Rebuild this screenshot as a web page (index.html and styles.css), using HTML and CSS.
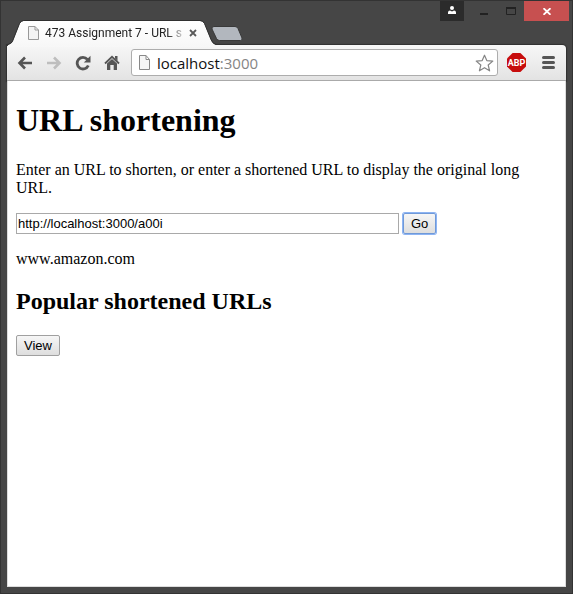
FILE: index.html
```html
<!DOCTYPE html>
<html lang="en">
<head>
<meta charset="utf-8">
<title>473 Assignment 7 - URL shortening</title>
<link rel="stylesheet" href="styles.css">
</head>
<body>
<div class="window">
  <header class="titlebar">
    <div class="tab">
      <svg class="tab-shape" width="218" height="27" viewBox="0 0 218 27" aria-hidden="true">
        <defs><linearGradient id="tabfill" x1="0" y1="0" x2="0" y2="1"><stop offset="0" stop-color="#fff"/><stop offset="1" stop-color="#f7f7f7"/></linearGradient></defs>
        <path d="M0 27V26.500Q1 24.500 4 23.500Q5.500 22.500 6 20.500L12.500 4Q14 1 16.500 1H193Q196 1 197.500 4L204 20Q205.500 24 209 25V27Z" fill="url(#tabfill)"/>
        <path d="M0 26Q1 24 4 23Q5.500 22 6 20L12.500 3.500Q14 .5 16.500 .5H193Q196 .5 197.500 3.500L204 19.500Q205.500 23.500 209 24.500" fill="none" stroke="#303030"/>
      </svg>
      <svg class="tab-page" width="11" height="14" viewBox="0 0 11 14" aria-hidden="true"><path d="M.5 .5H7L10.500 4V13.500H.5ZM7 .5V4H10.500" fill="#f3f3f3" stroke="#999"/></svg>
      <span class="tab-title">473 Assignment 7 - URL s</span>
      <button class="tab-close" aria-label="Close tab"><svg width="8" height="8" viewBox="0 0 8 8"><path d="M1 1L7 7M7 1L1 7" stroke="#5a5a5a" stroke-width="1.800"/></svg></button>
    </div>
    <button class="new-tab" aria-label="New tab"><svg width="32" height="15" viewBox="0 0 32 15"><path d="M3 .5H24Q26 .5 27 2.500L31 12Q31.500 14.500 29.500 14.500H8.500Q6.500 14.500 5.500 12.500L1 3Q.5 .5 3 .5Z" fill="#b2b7be" stroke="#393939"/></svg></button>
    <div class="controls">
      <button class="control profile" aria-label="Profile"><svg width="8" height="8" viewBox="0 0 8 8"><circle cx="4" cy="2" r="2" fill="#fff"/><path d="M0 8V6.500Q0 4.500 2 4.500L4 5.500L6 4.500Q8 4.500 8 6.500V8Z" fill="#fff"/></svg></button>
      <button class="control minimize" aria-label="Minimize"><svg width="8" height="2"><path d="M0 0H8V2H0Z" fill="#222"/></svg></button>
      <button class="control maximize" aria-label="Maximize"><svg width="10" height="8"><path d="M.5 1H9.500V7.500H.5Z" fill="none" stroke="#222"/><path d="M0 0H10V2H0Z" fill="#222"/></svg></button>
      <button class="control close" aria-label="Close"><svg width="8" height="7" viewBox="0 0 8 7"><path d="M.5 .2L7.500 6.800M7.500 .2L.5 6.800" stroke="#fff" stroke-width="1.800"/></svg></button>
    </div>
  </header>
  <nav class="toolbar">
    <button class="tool" aria-label="Back"><svg width="16" height="14" viewBox="0 0 16 14"><path d="M15 7H3M8 1.500L2.500 7L8 12.500" fill="none" stroke="#555" stroke-width="2.600"/></svg></button>
    <button class="tool" aria-label="Forward"><svg width="16" height="14" viewBox="0 0 16 14"><path d="M1 7H13M8 1.500L13.500 7L8 12.500" fill="none" stroke="#bebebe" stroke-width="2.600"/></svg></button>
    <button class="tool" aria-label="Reload"><svg width="16" height="16" viewBox="0 0 16 16"><path d="M12.400 4.400A5.800 5.800 0 1 0 13.300 10.500" fill="none" stroke="#555" stroke-width="2.800"/><path d="M15.500 .8V7.500H8.800Z" fill="#555"/></svg></button>
    <button class="tool" aria-label="Home"><svg width="16" height="16" viewBox="0 0 16 16"><path d="M1 8.500L8 1.800L15 8.500" fill="none" stroke="#555" stroke-width="1.800"/><path d="M11 1H13.500V6L11 3.600ZM3 8.600L8 4L13 8.600V15H9.700V10H6.300V15H3Z" fill="#555"/></svg></button>
    <div class="address">
      <svg class="address-page" width="11" height="15" viewBox="0 0 11 15" aria-hidden="true"><path d="M.5 .5H7L10.500 4.500V14.500H.5ZM7 .5V4.500H10.500" fill="#f5f5f5" stroke="#888"/></svg>
      <span class="url">localhost<span class="port">:3000</span></span>
      <button class="star" aria-label="Bookmark"><svg width="19" height="18" viewBox="0 0 19 18"><path d="M9.500 1.200L11.800 6.600L17.800 7.100L13.200 11L14.600 16.800L9.500 13.700L4.400 16.800L5.800 11L1.200 7.100L7.200 6.600Z" fill="#fff" stroke="#858585" stroke-width="1.200" stroke-linejoin="round"/></svg></button>
    </div>
    <button class="adblock" aria-label="Adblock Plus"><svg width="19" height="19" viewBox="0 0 19 19"><path d="M5.600 0H13.400L19 5.600V13.400L13.400 19H5.600L0 13.400V5.600Z" fill="#c70d0d"/><text class="abp" x="9.500" y="13" text-anchor="middle">ABP</text></svg></button>
    <button class="menu" aria-label="Menu"><svg width="13" height="13" viewBox="0 0 13 13"><path d="M1.500 1.500H11.500M1.500 6.500H11.500M1.500 11.500H11.500" stroke="#555" stroke-width="3" stroke-linecap="round"/></svg></button>
  </nav>
  <main class="page">
    <h1>URL shortening</h1>
    <p><label for="url">Enter an URL to shorten, or enter a shortened URL to display the original long URL.</label></p>
    <form class="shorten">
      <input id="url" class="field" type="text" value="http://localhost:3000/a00i">
      <button class="button focused" type="button">Go</button>
    </form>
    <p>www.amazon.com</p>
    <h2>Popular shortened URLs</h2>
    <button class="button" type="button">View</button>
  </main>
</div>
</body>
</html>
```
FILE: styles.css
```css
* {
  box-sizing: border-box;
}

body {
  margin: 0;
  font-family: "Liberation Serif", serif;
  font-size: 16px;
  line-height: 18px;
  color: #000;
}

button {
  margin: 0;
  padding: 0;
  border: 0;
  background: none;
}

svg {
  display: block;
}

.window {
  display: flex;
  flex-direction: column;
  min-height: 100vh;
  padding: 0 6px 6px;
  border: 1px solid #333;
  background: #464646;
}

.titlebar {
  display: flex;
  height: 44px;
}

.tab {
  position: relative;
  z-index: 1;
  display: flex;
  align-items: center;
  width: 204px;
  height: 26px;
  margin-top: 19px;
  padding-left: 21px;
}

.tab-shape {
  position: absolute;
  left: 0;
  top: 0;
}

.tab-page,
.tab-title,
.tab-close {
  position: relative;
}

.tab-title {
  width: 137px;
  margin: 0 7px 0 6px;
  white-space: nowrap;
  font: 12px/18px "Roboto", sans-serif;
  color: #222;
  -webkit-mask-image: linear-gradient(to right, #000 122px, transparent 142px);
  mask-image: linear-gradient(to right, #000 122px, transparent 142px);
}

.new-tab {
  align-self: flex-start;
  margin-top: 25px;
}

.controls {
  display: flex;
  align-items: flex-start;
  margin-left: auto;
  margin-right: -6px;
  padding-right: 3px;
}

.control {
  display: flex;
  align-items: center;
  justify-content: center;
  width: 27px;
  height: 20px;
}

.profile {
  width: 24px;
  height: 20px;
  margin-right: 6px;
  padding-bottom: 2px;
  background: #2b2b2b;
}

.minimize {
  padding-top: 6px;
}

.close {
  width: 45px;
  background: #c75050;
}

.toolbar {
  display: flex;
  align-items: center;
  height: 36px;
  padding: 0 11px 0 10px;
  border-bottom: 1px solid #aaa;
  border-radius: 0 4px 0 0;
  background: linear-gradient(#f7f7f7, #e3e3e3);
  box-shadow: 0 0 1px 1px #303030;
}

.tool {
  flex: none;
  width: 16px;
  margin-right: 13px;
}

.address {
  display: flex;
  flex: 1;
  align-items: center;
  min-width: 0;
  height: 27px;
  margin-left: -2px;
  margin-right: 9px;
  padding: 0 3px 0 7px;
  border: 1px solid #adadad;
  border-radius: 3px;
  background: #fff;
}

.url {
  margin-left: 7px;
  font: 15px/20px "Open Sans", sans-serif;
  color: #111;
}

.port {
  color: #858585;
}

.star {
  margin-left: auto;
}

.abp {
  font: bold 9px "Roboto", sans-serif;
  fill: #fff;
}

.menu {
  margin-left: 16px;
}

.page {
  flex: 1;
  padding: 21px 8px 8px;
  border: 1px solid #ddd;
  border-top: 0;
  background: #fff;
}

h1 {
  margin: 0 0 22px;
  font-size: 32px;
  line-height: 37px;
}

p {
  margin: 0 0 16px;
}

.shorten {
  display: flex;
  gap: 4px;
  margin-bottom: 16px;
}

.field {
  width: 383px;
  height: 21px;
  padding: 1px;
  border: 1px solid #a9a9a9;
  font: 13px/17px "Liberation Sans", sans-serif;
  color: #000;
}

h2 {
  margin: 19px 0 20px;
  font-size: 24px;
  line-height: 28px;
}

.button {
  height: 21px;
  padding: 0 7px;
  border: 1px solid #a0a0a0;
  border-radius: 2px;
  background: linear-gradient(#f6f6f6, #dedede);
  font: 13px/19px "Liberation Sans", sans-serif;
  color: #000;
}

.focused {
  border-color: #6f99d8;
  box-shadow: 0 0 0 1px #8db4f3;
}
```
